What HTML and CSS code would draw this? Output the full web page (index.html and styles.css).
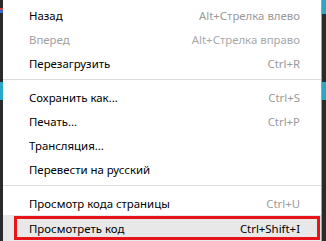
FILE: index.html
```html
<!DOCTYPE html>
<html lang="ru">
<head>
<meta charset="UTF-8">
<title>Контекстное меню</title>
<link rel="stylesheet" href="styles.css">
</head>
<body>

<div class="desk">
  <div class="edge edge-left"></div>

  <div class="menu">
    <div class="item"><span>Назад</span><span class="key">Alt+Стрелка влево</span></div>
    <div class="item disabled"><span>Вперед</span><span class="key">Alt+Стрелка вправо</span></div>
    <div class="item"><span>Перезагрузить</span><span class="key">Ctrl+R</span></div>
    <div class="sep"></div>
    <div class="item"><span>Сохранить как...</span><span class="key">Ctrl+S</span></div>
    <div class="item"><span>Печать...</span><span class="key">Ctrl+P</span></div>
    <div class="item"><span>Трансляция...</span></div>
    <div class="item"><span>Перевести на русский</span></div>
    <div class="sep"></div>
    <div class="item"><span>Просмотр кода страницы</span><span class="key">Ctrl+U</span></div>
    <div class="item active"><span>Просмотреть код</span><span class="key">Ctrl+Shift+I</span>
      <div class="mark"></div>
    </div>
  </div>

  <div class="edge edge-right"></div>
</div>

</body>
</html>
```

FILE: styles.css
```css
body {
  margin: 0;
  padding: 0;
  background: #2b2b2b;
  font-family: "Noto Sans", "Open Sans", sans-serif;
  font-size: 11.4px;
}
.desk {
  display: flex;
  width: 326px;
  height: 241px;
  overflow: hidden;
}
.edge {
  background: #2a2a2a;
}
.edge-left {
  width: 3px;
  background: linear-gradient(#2a2a2a 0, #2a2a2a 8px, #c84848 8px, #c84848 10px, #3a6ad0 10px, #3a6ad0 13px, #2a2a2a 13px, #2a2a2a 82px, #2aa8c8 82px, #2aa8c8 100px, #2a2a2a 100px);
}
.edge-right {
  width: 4px;
  background: linear-gradient(#2aa8c8 0, #2aa8c8 14px, #2a2a2a 14px, #2a2a2a 82px, #2aa8c8 82px, #2aa8c8 100px, #2a2a2a 100px);
}
.menu {
  width: 318px;
  background: #fff;
  border-right: 1px solid #a0a0a0;
  padding-top: 3px;
}
.item {
  position: relative;
  display: flex;
  justify-content: space-between;
  align-items: center;
  height: 24px;
  padding: 0 21px 0 26px;
  color: #000;
}
.item .key {
  color: #9a9a9a;
}
.item.disabled {
  color: #a0a0a0;
}
.item.disabled .key {
  color: #a8a8a8;
}
.item.active {
  background: #e8e8e8;
  height: 26px;
  padding-bottom: 2px;
}
.item.active .key {
  color: #000;
}
.sep {
  height: 1px;
  background: #dcdcdc;
  margin: 4px 0 5px 0;
}
.mark {
  position: absolute;
  left: 11px;
  right: 1px;
  top: 1px;
  bottom: 3px;
  border: 3px solid #e8141c;
}
```
